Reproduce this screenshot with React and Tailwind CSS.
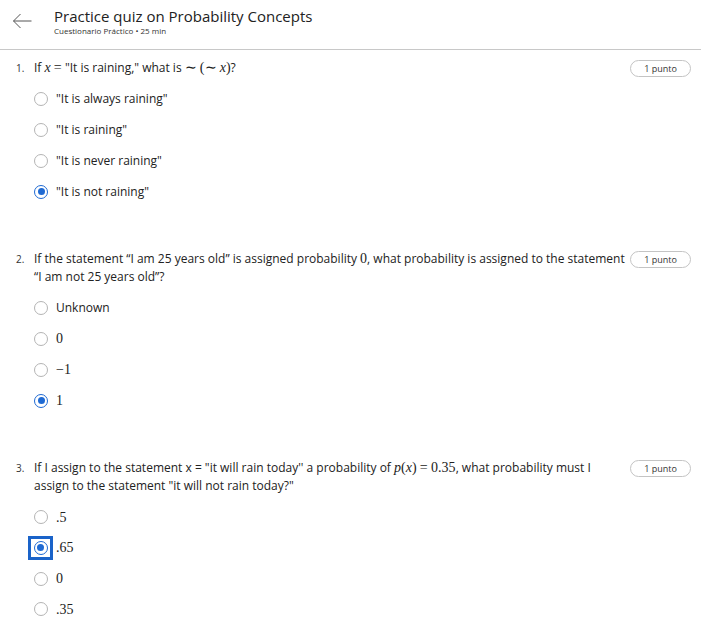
import React from "react";

const questions = [
  {
    id: 1,
    text: (
      <>
        If <M>x</M> <S>=</S> "It is raining," what is <S>∼</S> <S>(∼</S> <M>x</M><S>)</S>?
      </>
    ),
    options: [
      { label: '"It is always raining"' },
      { label: '"It is raining"' },
      { label: '"It is never raining"' },
      { label: '"It is not raining"', checked: true },
    ],
  },
  {
    id: 2,
    text: (
      <>
        If the statement “I am 25 years old” is assigned probability <S>0</S>, what probability is assigned to the statement “I am not 25 years old”?
      </>
    ),
    options: [
      { label: "Unknown" },
      { label: "0", math: true },
      { label: "−1", math: true },
      { label: "1", math: true, checked: true },
    ],
  },
  {
    id: 3,
    text: (
      <>
        If I assign to the statement x = "it will rain today'' a probability of <M>p</M>
        <S>(</S>
        <M>x</M>
        <S>)</S> <S>= 0.35</S>, what probability must I assign to the statement "it will not rain today?"
      </>
    ),
    options: [
      { label: ".5", math: true },
      { label: ".65", math: true, checked: true, focused: true },
      { label: "0", math: true },
      { label: ".35", math: true },
    ],
  },
];

// math bits (KaTeX look)
function M({ children }) {
  return <span className="font-['Liberation_Serif',serif] italic text-[14px] leading-[16px]">{children}</span>;
}
function S({ children }) {
  return <span className="font-['Liberation_Serif',serif] text-[14px] leading-[16px]">{children}</span>;
}

function Radio({ checked, focused }) {
  const circle = checked ? (
    <span className="flex h-[14px] w-[14px] items-center justify-center rounded-full border-[1.5px] border-[#1f6ad3]">
      <span className="h-[7px] w-[7px] rounded-full bg-[#1f6ad3]" />
    </span>
  ) : (
    <span className="h-[14px] w-[14px] rounded-full border-[1.5px] border-[#b4b4b4]" />
  );
  if (focused) {
    return (
      <span className="-ml-[6px] -mr-[5px] flex h-[24px] w-[25px] items-center justify-center border-[3px] border-[#1a63c9] bg-white">
        {circle}
      </span>
    );
  }
  return circle;
}

function Question({ q }) {
  return (
    <div className="flex flex-col">
      <div className="flex items-start">
        <span className="w-[18px] shrink-0 pt-[2px] text-[10px] text-[#333]">{q.id}.</span>
        <p className="flex-1 pr-[3px] text-[12px] leading-[18px] text-[#222]">{q.text}</p>
        <span className="mt-[1px] flex h-[17px] w-[61px] shrink-0 items-center justify-center rounded-full border border-[#c4c4c4] text-[9px] text-[#333]">
          1 punto
        </span>
      </div>
      <div className="mt-[13px] flex flex-col gap-[12.3px] pl-[18px]">
        {q.options.map((o, i) => (
          <label key={i} className="flex h-[18.5px] items-center gap-[8px]">
            <Radio checked={o.checked} focused={o.focused} />
            <span
              className={
                o.math
                  ? "font-['Liberation_Serif',serif] text-[14px] text-[#222]"
                  : "text-[12px] text-[#222]"
              }
            >
              {o.label}
            </span>
          </label>
        ))}
      </div>
    </div>
  );
}

export default function App() {
  return (
    <div className="min-h-screen bg-white font-['Open_Sans',sans-serif]">
      <header className="flex h-[50px] items-start border-b border-[#c8c8c8] pl-[12px] pt-[7px]">
        <svg width="20" height="20" viewBox="0 0 20 20" className="mt-[4px]" fill="none" stroke="#555" strokeWidth="1">
          <path d="M19.5 10H1.5M8.5 3l-7 7 7 7" />
        </svg>
        <div className="ml-[22px] flex flex-col">
          <h1 className="text-[15px] leading-[18px] text-[#222]">Practice quiz on Probability Concepts</h1>
          <span className="text-[8px] leading-[12px] text-[#333]">Cuestionario Práctico • 25 min</span>
        </div>
      </header>
      <main className="flex flex-col gap-[49px] pl-[16px] pr-[10px] pt-[9px]">
        {questions.map((q) => (
          <Question key={q.id} q={q} />
        ))}
      </main>
    </div>
  );
}
